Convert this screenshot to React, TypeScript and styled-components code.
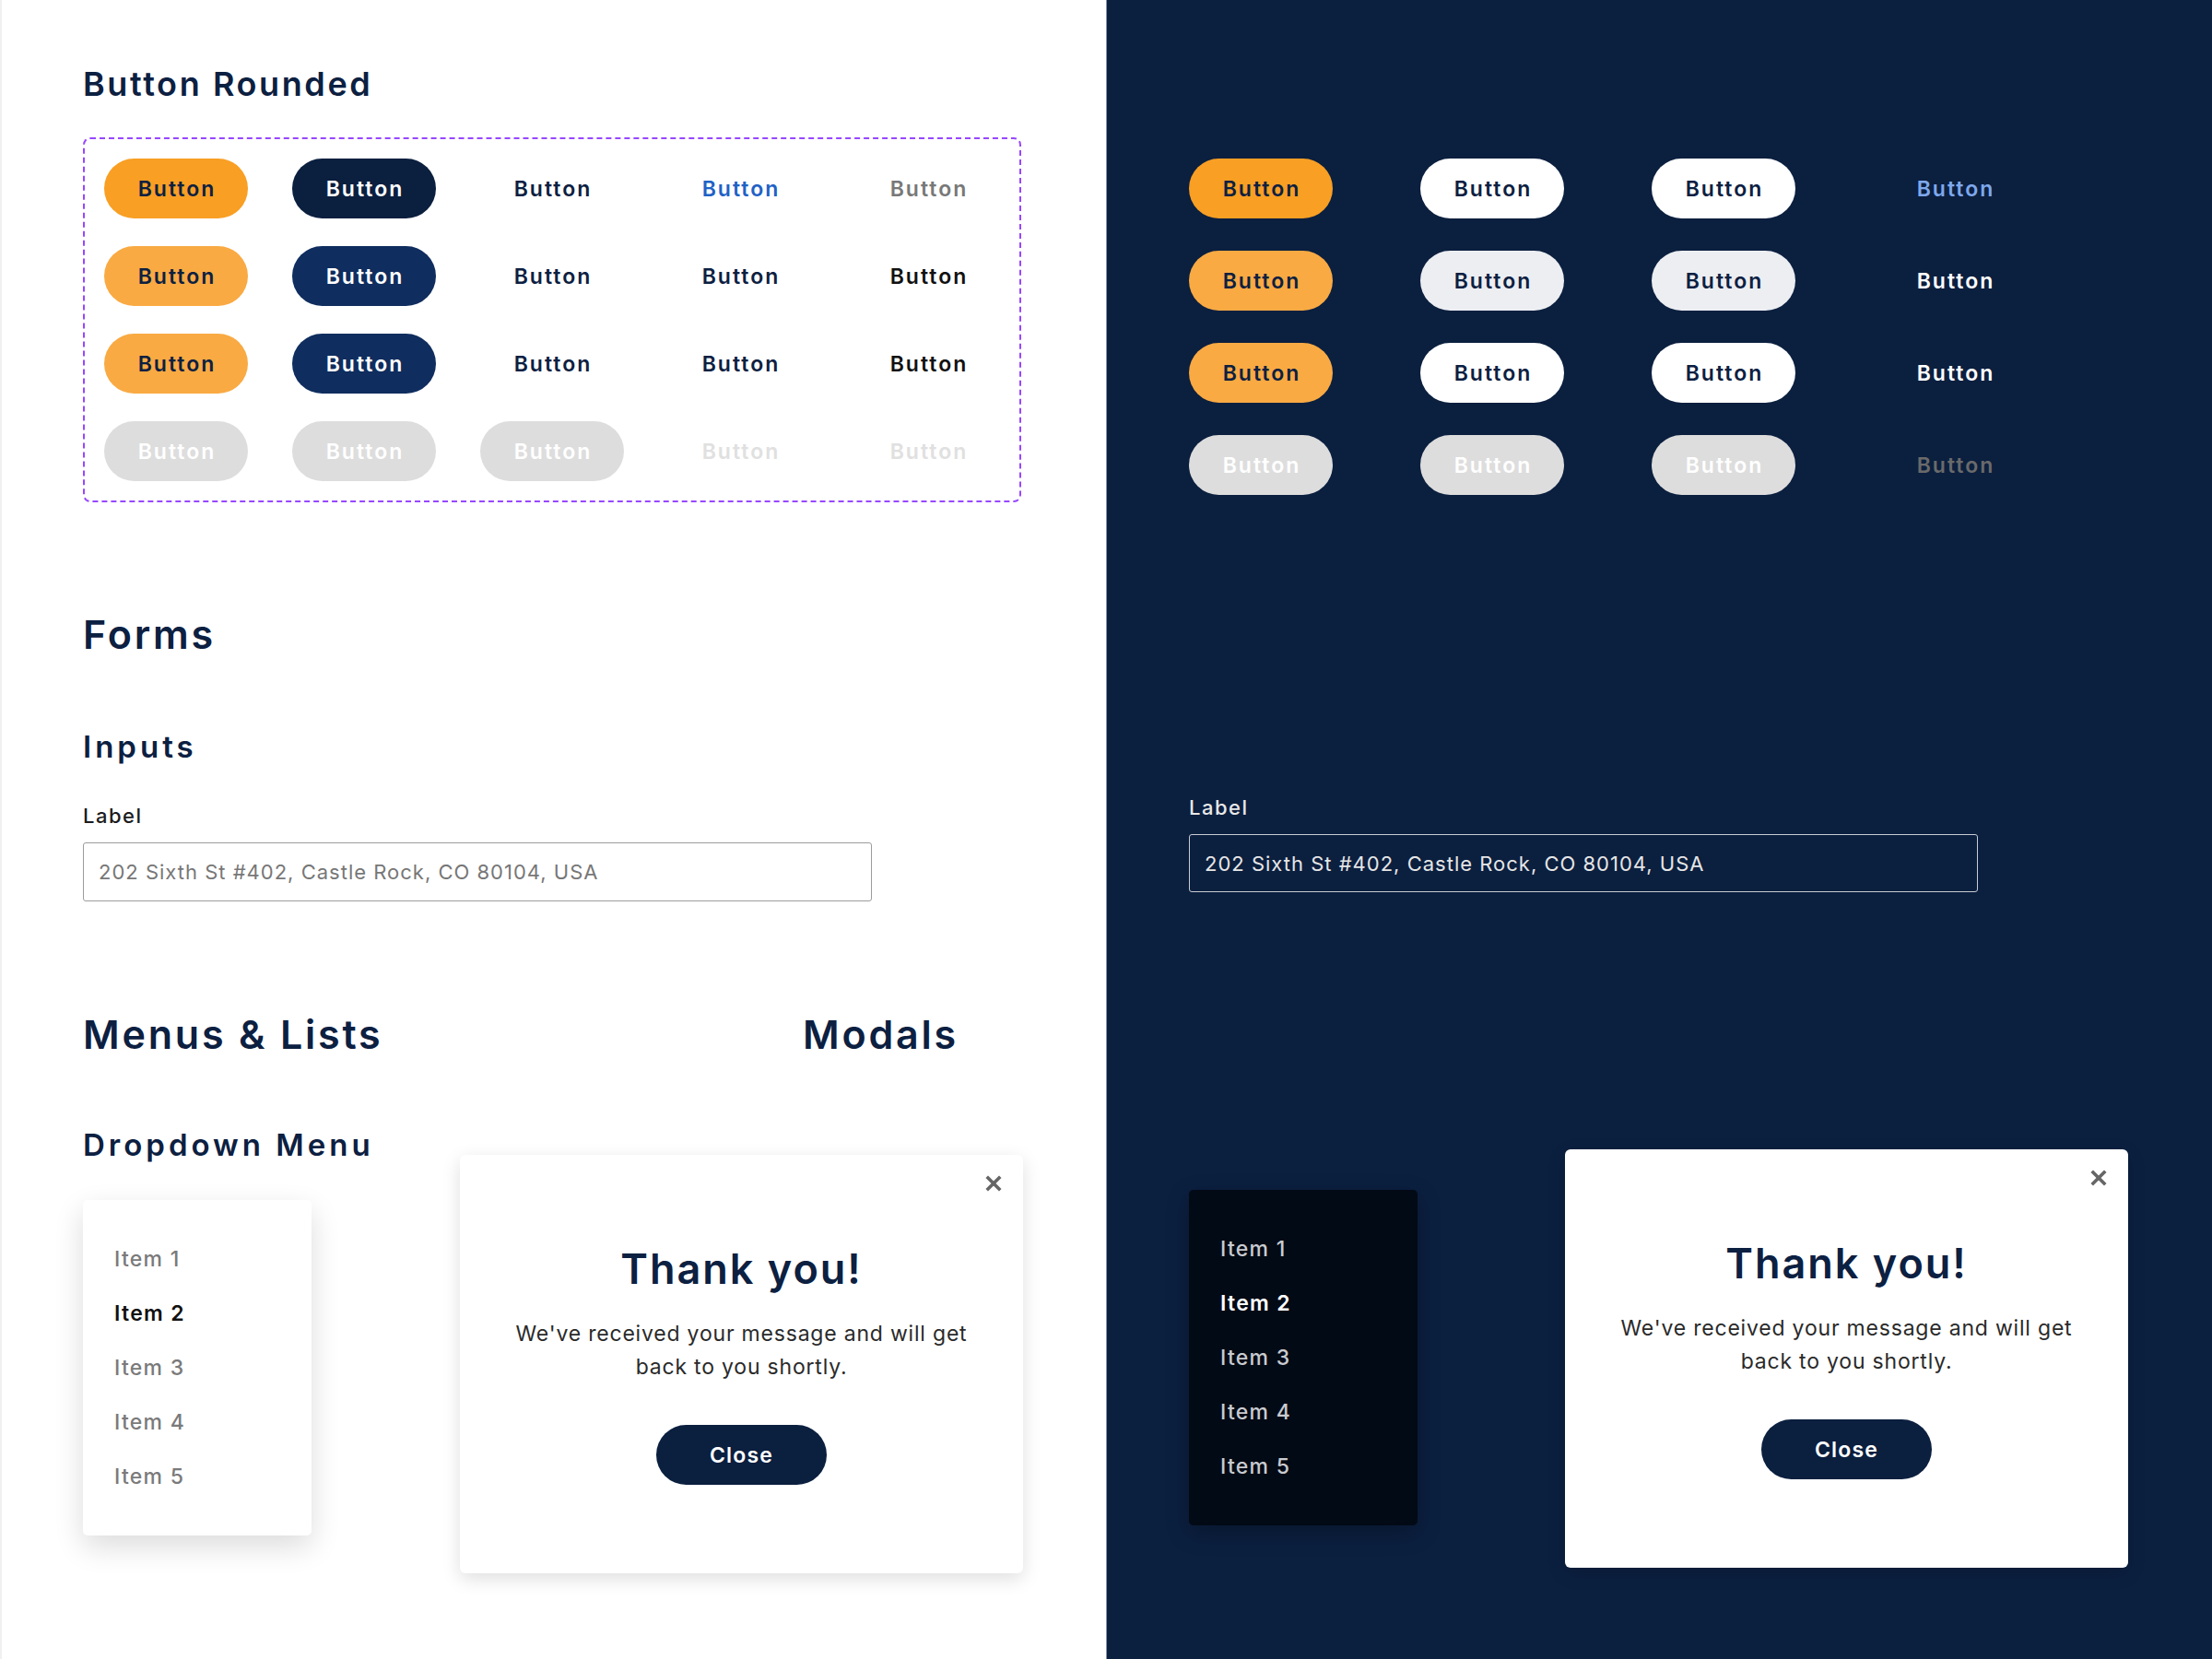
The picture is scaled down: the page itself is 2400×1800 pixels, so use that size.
import React from 'react'
import styled, { createGlobalStyle } from 'styled-components'

const GlobalStyle = createGlobalStyle`
  html, body {
    margin: 0;
    padding: 0;
  }
  body {
    font-family: Inter, "Open Sans", "Liberation Sans", sans-serif;
    -webkit-font-smoothing: antialiased;
  }
  * { box-sizing: border-box; }
`

const NAVY = '#0C2041'

type BtnSpec = { bg?: string; fg: string }

const lightRows: BtnSpec[][] = [
  [
    { bg: '#F89F24', fg: NAVY },
    { bg: '#0B1F3F', fg: '#ffffff' },
    { fg: NAVY },
    { fg: '#2161C6' },
    { fg: '#787878' },
  ],
  [
    { bg: '#F9AA43', fg: NAVY },
    { bg: '#0F2D5E', fg: '#ffffff' },
    { fg: NAVY },
    { fg: NAVY },
    { fg: '#111111' },
  ],
  [
    { bg: '#F9AA43', fg: NAVY },
    { bg: '#0F2D5E', fg: '#ffffff' },
    { fg: NAVY },
    { fg: NAVY },
    { fg: '#111111' },
  ],
  [
    { bg: '#DDDDDD', fg: '#ffffff' },
    { bg: '#DDDDDD', fg: '#ffffff' },
    { bg: '#DDDDDD', fg: '#ffffff' },
    { fg: '#E0E0E0' },
    { fg: '#E0E0E0' },
  ],
]

const darkRows: BtnSpec[][] = [
  [
    { bg: '#F89F24', fg: NAVY },
    { bg: '#ffffff', fg: NAVY },
    { bg: '#ffffff', fg: NAVY },
    { fg: '#7EA8EC' },
  ],
  [
    { bg: '#F9AA43', fg: NAVY },
    { bg: '#ECEEF2', fg: NAVY },
    { bg: '#ECEEF2', fg: NAVY },
    { fg: '#ffffff' },
  ],
  [
    { bg: '#F9AA43', fg: NAVY },
    { bg: '#ffffff', fg: NAVY },
    { bg: '#ffffff', fg: NAVY },
    { fg: '#ffffff' },
  ],
  [
    { bg: '#DDDDDD', fg: '#ffffff' },
    { bg: '#DDDDDD', fg: '#ffffff' },
    { bg: '#DDDDDD', fg: '#ffffff' },
    { fg: '#6A6A6A' },
  ],
]

const items = ['Item 1', 'Item 2', 'Item 3', 'Item 4', 'Item 5']

const CloseIcon = () => (
  <svg width="18" height="18" viewBox="0 0 18 18">
    <path d="M3 3 L15 15 M15 3 L3 15" stroke="#666" strokeWidth="3.6" strokeLinecap="square" fill="none" />
  </svg>
)

const Modal: React.FC = () => (
  <ModalCard>
    <ModalX>
      <CloseIcon />
    </ModalX>
    <ModalTitle>Thank you!</ModalTitle>
    <ModalText>
      We've received your message and will get
      <br />
      back to you shortly.
    </ModalText>
    <CloseButton>Close</CloseButton>
  </ModalCard>
)

const App: React.FC = () => {
  return (
    <>
      <GlobalStyle />
      <Page>
        <LightPanel>
          <GroupTitle>Button Rounded</GroupTitle>
          <ButtonSet>
            {lightRows.map((row, r) =>
              row.map((b, c) => (
                <Btn key={`l${r}${c}`} $bg={b.bg} $fg={b.fg}>
                  Button
                </Btn>
              ))
            )}
          </ButtonSet>

          <SectionTitle $mt={122}>Forms</SectionTitle>
          <SubTitle $mt={84}>Inputs</SubTitle>
          <FieldLabel $mt={47}>Label</FieldLabel>
          <TextInput placeholder="202 Sixth St #402, Castle Rock, CO 80104, USA" />

          <HeadRow>
            <SectionTitle $mt={0}>Menus &amp; Lists</SectionTitle>
            <ModalsTitle $mt={0}>Modals</ModalsTitle>
          </HeadRow>

          <ContentRow $mt={82}>
            <div>
              <SubTitle $mt={0}>Dropdown Menu</SubTitle>
              <Dropdown $mt={43}>
                {items.map((it, i) => (
                  <MenuItem key={it} $active={i === 1}>
                    {it}
                  </MenuItem>
                ))}
              </Dropdown>
            </div>
            <ModalSlot $mt={27}>
              <Modal />
            </ModalSlot>
          </ContentRow>
        </LightPanel>

        <DarkPanel>
          <DarkButtonSet>
            {darkRows.map((row, r) =>
              row.map((b, c) => (
                <Btn key={`d${r}${c}`} $bg={b.bg} $fg={b.fg}>
                  Button
                </Btn>
              ))
            )}
          </DarkButtonSet>

          <FieldLabel $mt={328} $dark>
            Label
          </FieldLabel>
          <TextInput $dark placeholder="202 Sixth St #402, Castle Rock, CO 80104, USA" />

          <DarkContentRow>
            <div>
              <Dropdown $mt={44} $dark>
                {items.map((it, i) => (
                  <MenuItem key={it} $active={i === 1} $dark>
                    {it}
                  </MenuItem>
                ))}
              </Dropdown>
            </div>
            <ModalSlot $mt={0}>
              <Modal />
            </ModalSlot>
          </DarkContentRow>
        </DarkPanel>
      </Page>
    </>
  )
}

const Page = styled.div`
  display: grid;
  grid-template-columns: 1200px 1200px;
  width: 2400px;
  height: 1800px;
  overflow: hidden;
`

const LightPanel = styled.div`
  background: #ffffff;
  border-left: 2px solid #f0f0f0;
  padding: 73px 0 0 88px;
  display: flex;
  flex-direction: column;
  align-items: flex-start;
`

const DarkPanel = styled.div`
  background: #0B1F3F;
  border-left: 1px solid #8793a8;
  padding: 172px 0 0 89px;
  display: flex;
  flex-direction: column;
  align-items: flex-start;
`

const GroupTitle = styled.h2`
  margin: 0;
  font-size: 36px;
  line-height: 1;
  font-weight: 600;
  color: ${NAVY};
  letter-spacing: 2.6px;
`

const SectionTitle = styled.h1<{ $mt: number }>`
  margin: ${p => p.$mt}px 0 0;
  font-size: 43px;
  line-height: 1;
  font-weight: 600;
  color: ${NAVY};
  letter-spacing: 2.8px;
`

const ModalsTitle = styled(SectionTitle)`
  padding-left: 372px;
`

const SubTitle = styled.h3<{ $mt: number }>`
  margin: ${p => p.$mt}px 0 0;
  font-size: 33px;
  line-height: 1;
  font-weight: 600;
  color: ${NAVY};
  letter-spacing: 4px;
`

const ButtonSet = styled.div`
  margin-top: 40px;
  width: 1018px;
  height: 396px;
  border: 2px dashed #9747FF;
  border-radius: 8px;
  padding: 21px;
  display: grid;
  grid-template-columns: repeat(5, 156px);
  grid-auto-rows: 65px;
  column-gap: 48px;
  row-gap: 30px;
`

const DarkButtonSet = styled.div`
  display: grid;
  grid-template-columns: repeat(4, 156px);
  grid-auto-rows: 65px;
  column-gap: 95px;
  row-gap: 35px;
`

const Btn = styled.button<{ $bg?: string; $fg: string }>`
  width: 156px;
  height: 65px;
  border: none;
  border-radius: 33px;
  background: ${p => p.$bg || 'transparent'};
  color: ${p => p.$fg};
  font-family: inherit;
  font-size: 23px;
  font-weight: 600;
  letter-spacing: 2px;
  padding: 0 0 0 2px;
  display: flex;
  align-items: center;
  justify-content: center;
`

const FieldLabel = styled.div<{ $mt: number; $dark?: boolean }>`
  margin-top: ${p => p.$mt}px;
  font-size: 22px;
  line-height: 1;
  font-weight: 500;
  color: ${p => (p.$dark ? '#E8E8E8' : '#1c1c1c')};
  letter-spacing: 1.5px;
`

const TextInput = styled.input<{ $dark?: boolean }>`
  margin-top: 18px;
  width: 856px;
  height: ${p => (p.$dark ? 63 : 64)}px;
  border: 1.5px solid ${p => (p.$dark ? '#C9CCD2' : '#9C9C9C')};
  border-radius: 3px;
  background: transparent;
  padding: 0 16px;
  font-family: inherit;
  font-size: 22px;
  letter-spacing: 1px;
  outline: none;
  &::placeholder {
    color: ${p => (p.$dark ? '#E6E6E6' : '#777777')};
    opacity: 1;
  }
`

const HeadRow = styled.div`
  margin-top: 123px;
  display: grid;
  grid-template-columns: 409px 610px;
`

const ContentRow = styled.div<{ $mt: number }>`
  margin-top: ${p => p.$mt}px;
  display: grid;
  grid-template-columns: 409px 610px;
  align-items: start;
`

const DarkContentRow = styled.div`
  margin-top: 279px;
  display: grid;
  grid-template-columns: 408px 612px;
  align-items: start;
`

const Dropdown = styled.div<{ $mt: number; $dark?: boolean }>`
  margin-top: ${p => p.$mt}px;
  width: 248px;
  height: 364px;
  padding: 34px 0 34px 34px;
  border-radius: 5px;
  background: ${p => (p.$dark ? '#020A15' : '#ffffff')};
  box-shadow: ${p =>
    p.$dark ? '0 8px 24px rgba(0, 0, 0, 0.25)' : '0 12px 32px rgba(0, 0, 0, 0.14)'};
  display: flex;
  flex-direction: column;
`

const MenuItem = styled.div<{ $active?: boolean; $dark?: boolean }>`
  height: 59px;
  display: flex;
  align-items: center;
  font-size: 23px;
  letter-spacing: 1.3px;
  font-weight: ${p => (p.$active ? 600 : 500)};
  color: ${p =>
    p.$dark ? (p.$active ? '#ffffff' : '#C9CBD0') : p.$active ? '#111111' : '#7A7A7A'};
`

const ModalSlot = styled.div<{ $mt: number }>`
  margin-top: ${p => p.$mt}px;
`

const ModalCard = styled.div`
  position: relative;
  width: 611px;
  height: 454px;
  background: #ffffff;
  border-radius: 6px;
  box-shadow: 0 6px 20px rgba(0, 0, 0, 0.13);
  padding-top: 101px;
  display: flex;
  flex-direction: column;
  align-items: center;
`

const ModalX = styled.div`
  position: absolute;
  top: 22px;
  right: 23px;
  width: 18px;
  height: 18px;
  display: flex;
`

const ModalTitle = styled.h2`
  margin: 0;
  font-size: 45px;
  line-height: 1;
  font-weight: 600;
  color: ${NAVY};
  letter-spacing: 2px;
`

const ModalText = styled.p`
  margin: 30px 0 0;
  font-size: 23px;
  line-height: 36px;
  color: #2a2a2a;
  text-align: center;
  letter-spacing: 0.8px;
`

const CloseButton = styled.button`
  margin-top: 45px;
  width: 185px;
  height: 65px;
  border: none;
  border-radius: 33px;
  background: #0B1F3F;
  color: #ffffff;
  font-family: inherit;
  font-size: 23px;
  font-weight: 600;
  letter-spacing: 1.2px;
`

export default App
